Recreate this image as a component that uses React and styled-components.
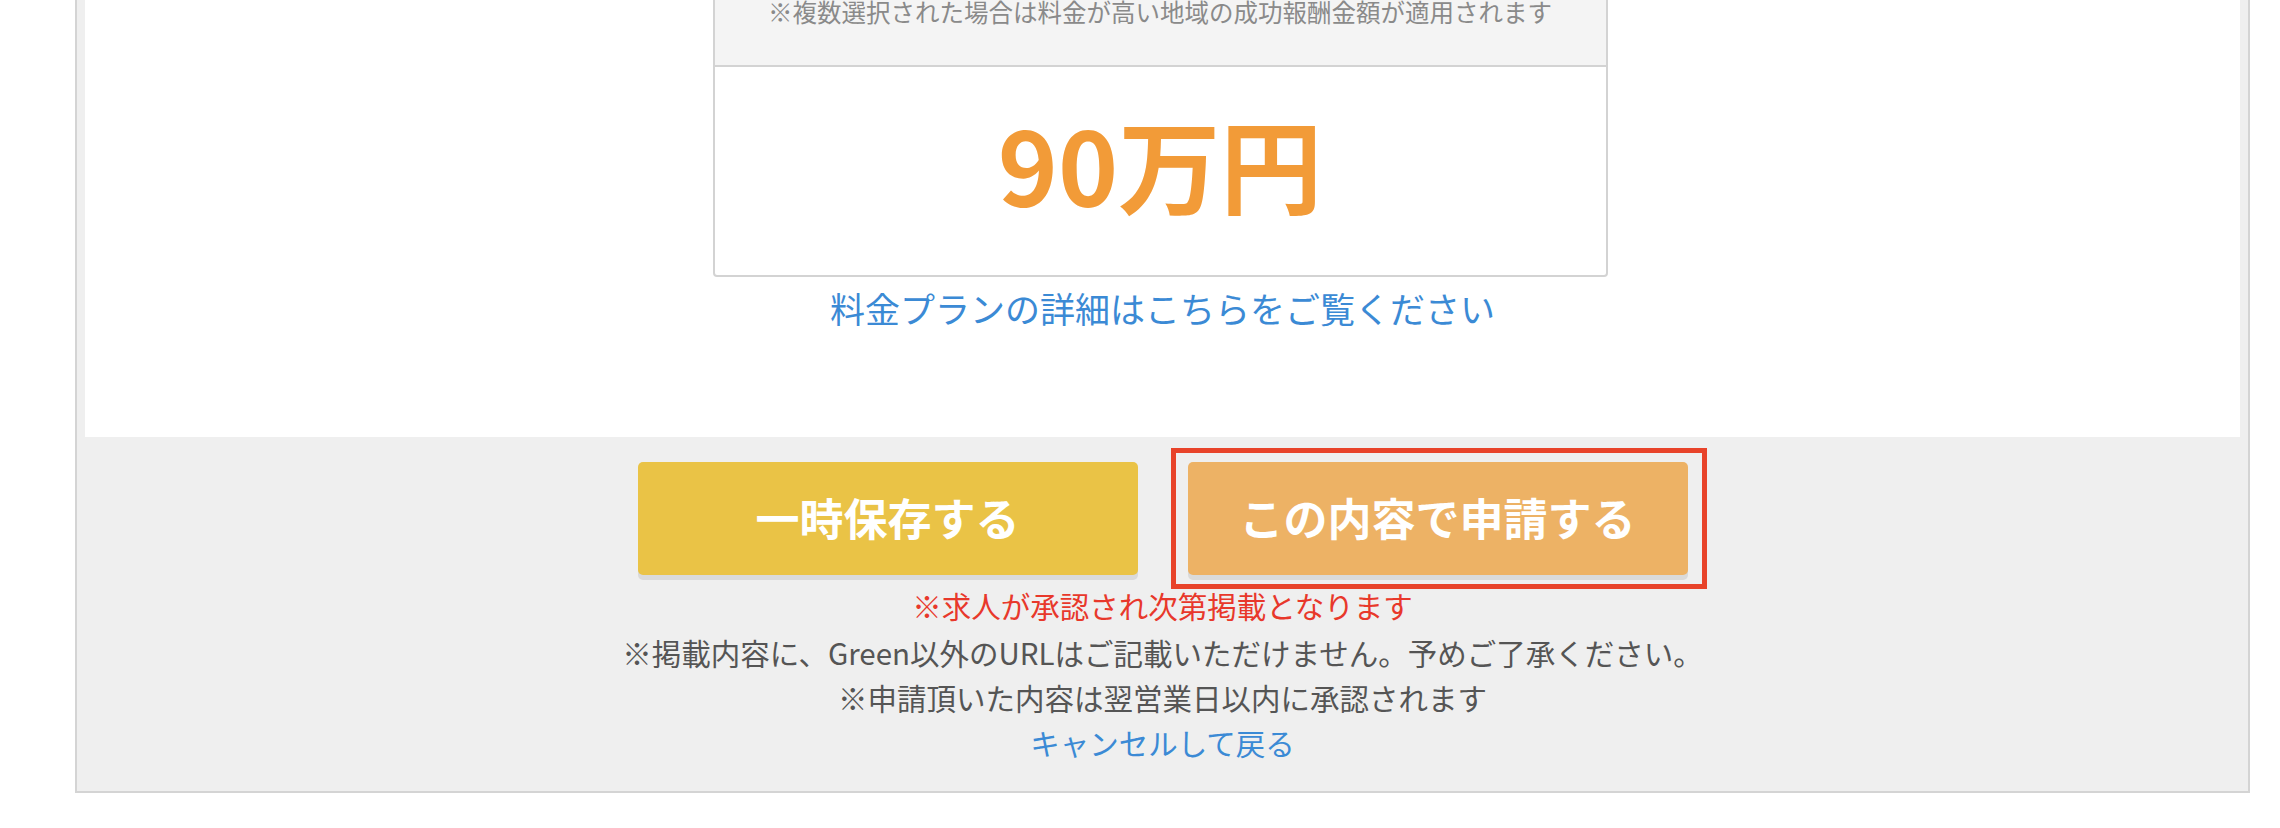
import styled, { createGlobalStyle } from 'styled-components'

const GlobalStyle = createGlobalStyle`
  html, body {
    margin: 0;
    padding: 0;
    background: #fff;
    font-family: "Noto Sans CJK JP", "Noto Sans", sans-serif;
    color: #555;
  }
`;

// page is scrolled down: the top of the form sits above the viewport
const Page = styled.div`
  margin-top: -52px;
  padding: 0 30px 34px 75px;
`;

const FormFrame = styled.div`
  background: #efefef;
  border: 2px solid #d4d4d4;
  padding: 0 8px 26px;
`;

const FormBody = styled.div`
  background: #fff;
  padding: 20px 0 103px;
  display: flex;
  flex-direction: column;
  align-items: center;
`;

const PriceBox = styled.div`
  width: 895px;
  box-sizing: border-box;
  margin-right: 5px;
  border: 2px solid #d3d3d3;
  border-radius: 4px;
  overflow: hidden;
`;

const PriceHeader = styled.div`
  background: #f4f4f4;
  border-bottom: 2px solid #d3d3d3;
  padding: 28px 0 41px;
  text-align: center;
`;

const Note = styled.p`
  margin: 0;
  font-size: 24.5px;
  line-height: 24px;
  color: #8a8a8a;
`;

const PriceValue = styled.div`
  height: 208px;
  box-sizing: border-box;
  padding-bottom: 16px;
  display: flex;
  align-items: center;
  justify-content: center;
  font-size: 102px;
  line-height: 1;
  font-weight: 700;
  color: #f29b38;
`;

const TextLink = styled.a`
  display: block;
  color: #3b8ad5;
  text-decoration: none;
  font-size: ${p => p.$size || 29.5}px;
  line-height: ${p => p.$line || 45}px;
  margin-top: ${p => p.$top || 0}px;
  text-align: center;
`;

const Actions = styled.div`
  display: flex;
  justify-content: center;
  gap: 50px;
  margin-top: 25px;
`;

const ActionButton = styled.button`
  width: 500px;
  height: 113px;
  padding: 0 0 4px;
  border: none;
  border-radius: 5px;
  background: ${p => p.$color};
  box-shadow: 0 5px 0 #dadada;
  color: #fff;
  font-family: inherit;
  font-size: 44px;
  font-weight: 700;
  display: flex;
  align-items: center;
  justify-content: center;
  cursor: pointer;
`;

const Highlight = styled.div`
  position: relative;

  &::after {
    content: '';
    position: absolute;
    top: -14px;
    left: -17px;
    right: -19px;
    bottom: -14px;
    border: 5px solid #e8432a;
    pointer-events: none;
  }
`;

const Notices = styled.div`
  margin-top: 8px;
  text-align: center;
`;

const Notice = styled.p`
  margin: 0 0 ${p => p.$gap || 0}px;
  font-size: 29.5px;
  line-height: 45px;
  color: ${p => (p.$alert ? '#e8382b' : '#555')};
`;

export default function App() {
  return (
    <>
      <GlobalStyle />
      <Page>
        <FormFrame>
          <FormBody>
            <PriceBox>
              <PriceHeader>
                <Note>※複数選択された場合は料金が高い地域の成功報酬金額が適用されます</Note>
              </PriceHeader>
              <PriceValue>90万円</PriceValue>
            </PriceBox>
            <TextLink href="#" $size={35} $line={52} $top={5}>
              料金プランの詳細はこちらをご覧ください
            </TextLink>
          </FormBody>

          <Actions>
            <ActionButton $color="#eac346">一時保存する</ActionButton>
            <Highlight>
              <ActionButton $color="#edb265">この内容で申請する</ActionButton>
            </Highlight>
          </Actions>

          <Notices>
            <Notice $alert $gap={2}>※求人が承認され次第掲載となります</Notice>
            <Notice>※掲載内容に、Green以外のURLはご記載いただけません。予めご了承ください。</Notice>
            <Notice>※申請頂いた内容は翌営業日以内に承認されます</Notice>
            <TextLink href="#">キャンセルして戻る</TextLink>
          </Notices>
        </FormFrame>
      </Page>
    </>
  )
}
